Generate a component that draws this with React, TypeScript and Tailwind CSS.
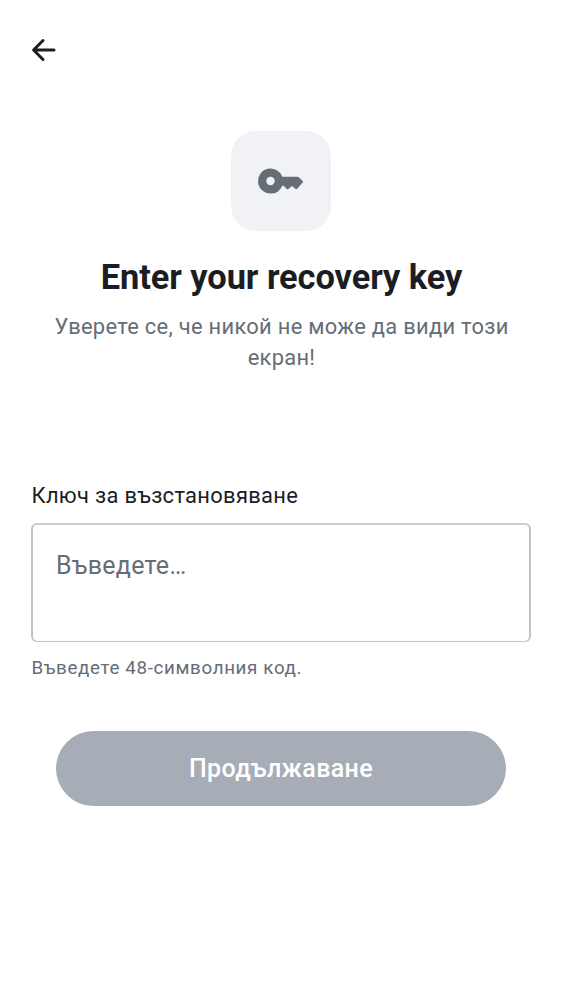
export default function App() {
  return (
    <main className="flex h-[1000px] w-[562px] flex-col bg-white px-[31px] font-['Roboto',sans-serif] text-[#1b1d22]">
      <header className="flex h-[100px] items-center">
        <button aria-label="Back">
          <svg width="26" height="26" viewBox="0 0 26 26" fill="none" stroke="currentColor" strokeWidth="3" strokeLinecap="round" strokeLinejoin="round">
            <path d="M23 13H3M12 3.5L2.6 13l9.4 9.5" />
          </svg>
        </button>
      </header>
      <section className="flex flex-col items-center pt-[31px]">
        <div className="flex size-[100px] items-center justify-center rounded-[25px] bg-[#f0f2f5] text-[#656d77]">
          <svg width="50" height="50" viewBox="0 0 50 50" fill="currentColor">
            <path fillRule="evenodd" d="M14.5 37.5a12.5 12.5 0 1 1 11.8-16.7h15.2c.6 0 1.1.2 1.5.6l3.7 3.6c.5.5.5 1.1 0 1.6l-5.2 6c-.6.7-1.5.8-2.2.1l-3.3-2.7-3.2 2.7c-.8.7-1.5.7-2.3 0l-3.2-3.2-1.2.4A12.5 12.5 0 0 1 14.5 37.5Zm0-8.3a4.2 4.2 0 1 0 0-8.4 4.2 4.2 0 0 0 0 8.4Z" />
          </svg>
        </div>
        <h1 className="mt-[25px] pl-px text-[34.4px] leading-[43px] font-bold tracking-[-0.07px] whitespace-nowrap">Enter your recovery key</h1>
        <p className="mt-[12px] pl-px text-center text-[21.9px] leading-[31px] tracking-[0.29px] text-[#656d77]">Уверете се, че никой не може да види този<br />екран!</p>
      </section>
      <section className="flex flex-col pt-[107px]">
        <label htmlFor="key" className="pl-[0.5px] text-[21.9px] leading-[31px] tracking-[0.32px]">Ключ за възстановяване</label>
        <textarea id="key" placeholder="Въведете…" className="mt-[12px] block h-[119px] w-[500px] resize-none rounded-[6px] border-x-2 border-t-2 border-b border-x-[#bcc3cd] border-t-[#c8cdd6] border-b-[#bcc3cd] px-[23px] pt-[24px] pb-[25px] text-[25px] leading-[34px] tracking-[0.28px] placeholder:text-[#656d77]" />
        <p className="mt-[14px] pl-[0.5px] text-[18.75px] leading-[25px] tracking-[0.65px] text-[#656d77]">Въведете 48-символния код.</p>
        <button className="mx-[25px] mt-[50px] h-[75px] rounded-full bg-[#a6adb7] text-[25px] font-medium tracking-[0.36px] text-white">Продължаване</button>
      </section>
    </main>
  );
}
